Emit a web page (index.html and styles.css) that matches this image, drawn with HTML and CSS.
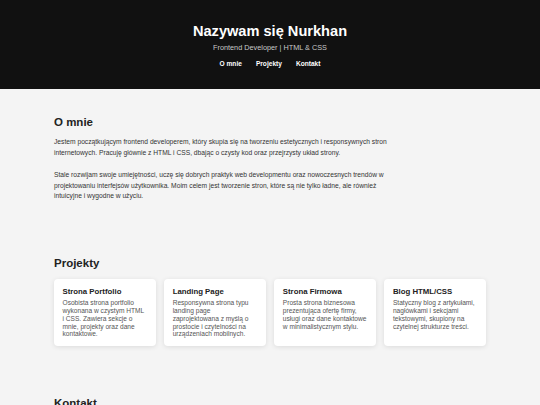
FILE: index.html
```html
<!DOCTYPE html>
<html lang="pl">
<head>
<meta charset="utf-8">
<title>Nurkhan</title>
<link rel="stylesheet" href="styles.css">
</head>
<body>
<header class="hero">
  <h1 class="hero-title">Nazywam się Nurkhan</h1>
  <p class="hero-sub">Frontend Developer | HTML &amp; CSS</p>
  <nav class="nav">
    <a href="#o-mnie">O mnie</a>
    <a href="#projekty">Projekty</a>
    <a href="#kontakt">Kontakt</a>
  </nav>
</header>
<main class="main">
  <section class="section" id="o-mnie">
    <h2 class="section-title">O mnie</h2>
    <p class="text">Jestem początkującym frontend developerem, który skupia się na tworzeniu estetycznych i responsywnych stron internetowych. Pracuję głównie z HTML i CSS, dbając o czysty kod oraz przejrzysty układ strony.</p>
    <p class="text">Stale rozwijam swoje umiejętności, uczę się dobrych praktyk web developmentu oraz nowoczesnych trendów w projektowaniu interfejsów użytkownika. Moim celem jest tworzenie stron, które są nie tylko ładne, ale również intuicyjne i wygodne w użyciu.</p>
  </section>
  <section class="section" id="projekty">
    <h2 class="section-title">Projekty</h2>
    <div class="cards">
      <article class="card">
        <h3 class="card-title">Strona Portfolio</h3>
        <p class="card-text">Osobista strona portfolio wykonana w czystym HTML i CSS. Zawiera sekcje o mnie, projekty oraz dane kontaktowe.</p>
      </article>
      <article class="card">
        <h3 class="card-title">Landing Page</h3>
        <p class="card-text">Responsywna strona typu landing page zaprojektowana z myślą o prostocie i czytelności na urządzeniach mobilnych.</p>
      </article>
      <article class="card">
        <h3 class="card-title">Strona Firmowa</h3>
        <p class="card-text">Prosta strona biznesowa prezentująca ofertę firmy, usługi oraz dane kontaktowe w minimalistycznym stylu.</p>
      </article>
      <article class="card">
        <h3 class="card-title">Blog HTML/CSS</h3>
        <p class="card-text">Statyczny blog z artykułami, nagłówkami i sekcjami tekstowymi, skupiony na czytelnej strukturze treści.</p>
      </article>
    </div>
  </section>
  <section class="section" id="kontakt">
    <h2 class="section-title">Kontakt</h2>
  </section>
</main>
</body>
</html>
```
FILE: styles.css
```css
* { box-sizing: border-box; }
html, body { margin: 0; padding: 0; }
body {
  background: #f4f4f4;
  font-family: "Liberation Sans", Arial, sans-serif;
  color: #333;
}
.hero {
  background: #111;
  color: #fff;
  text-align: center;
  padding-top: 21.5px;
  height: 89px;
}
.hero-title {
  margin: 0;
  font-size: 14.6px;
  font-weight: bold;
  line-height: 18px;
}
.hero-sub {
  margin: 3px 0 0;
  font-size: 7.3px;
  line-height: 10px;
  color: #c8c8c8;
}
.nav {
  display: flex;
  justify-content: center;
  gap: 14px;
  margin-top: 6px;
}
.nav a {
  color: #fff;
  text-decoration: none;
  font-size: 6.6px;
  font-weight: bold;
  line-height: 10px;
}
.main {
  width: 432px;
  margin: 0 auto;
}
.section {
  padding: 26px 0 16px;
}
.section-title {
  margin: 0 0 8px;
  font-size: 11.5px;
  line-height: 14px;
  color: #222;
}
.text {
  margin: 0 0 12px;
  max-width: 345px;
  font-size: 6.7px;
  line-height: 10.6px;
  color: #333;
}
.cards {
  display: grid;
  grid-template-columns: repeat(4, 1fr);
  gap: 8.6px;
  margin: 8.7px 0 8px;
}
.card {
  background: #fff;
  border-radius: 4px;
  padding: 8.7px 8.5px 7.8px;
  box-shadow: 0 1px 5px rgba(0,0,0,0.1);
}
.card-title {
  margin: 0 0 2px;
  font-size: 7.8px;
  line-height: 10px;
  color: #222;
}
.card-text {
  margin: 0;
  font-size: 6.6px;
  line-height: 7.75px;
  color: #555;
}
```
